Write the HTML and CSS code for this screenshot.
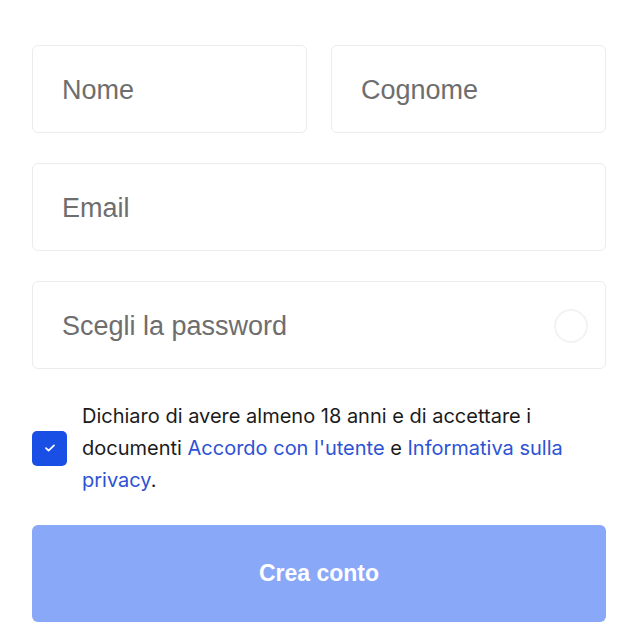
FILE: index.html
```html
<!DOCTYPE html>
<html lang="it">
<head>
<meta charset="utf-8">
<title>Crea conto</title>
<link rel="stylesheet" href="styles.css">
</head>
<body>
<form class="form">
  <div class="row">
    <label class="field"><input class="input" type="text" placeholder="Nome"></label>
    <label class="field"><input class="input" type="text" placeholder="Cognome"></label>
  </div>
  <label class="field"><input class="input" type="email" placeholder="Email"></label>
  <label class="field field-pass">
    <input class="input" type="password" placeholder="Scegli la password">
    <span class="ring"></span>
  </label>
  <div class="consent">
    <span class="check">
      <svg width="12" height="10" viewBox="0 0 12 10"><path d="M2 5.2 L4.6 7.6 L10 2.4" fill="none" stroke="#fff" stroke-width="1.8" stroke-linecap="round" stroke-linejoin="round"/></svg>
    </span>
    <p class="consent-text">Dichiaro di avere almeno 18 anni e di accettare i documenti <a class="link" href="#">Accordo con l'utente</a> e <a class="link" href="#">Informativa sulla privacy</a>.</p>
  </div>
  <button class="submit" type="button">Crea conto</button>
</form>
</body>
</html>
```

FILE: styles.css
```css
html, body {
  margin: 0;
  padding: 0;
  background: #ffffff;
}
.form {
  width: 574px;
  padding: 45px 0 0 32px;
  display: flex;
  flex-direction: column;
  gap: 30px;
}
.row {
  display: flex;
  gap: 24px;
}
.row .field {
  flex: 1;
}
.field {
  position: relative;
  display: block;
  height: 88px;
  box-sizing: border-box;
  border: 1px solid #ececec;
  border-radius: 6px;
}
.input {
  width: 100%;
  height: 100%;
  box-sizing: border-box;
  border: 0;
  outline: none;
  background: transparent;
  padding: 2px 0 0 29px;
  font-family: "Liberation Sans", Arial, sans-serif;
  font-size: 27px;
  color: #333;
}
.input::placeholder {
  color: #6e6e6e;
}
.ring {
  position: absolute;
  right: 17px;
  top: 27px;
  width: 30px;
  height: 30px;
  border: 2px solid #f3f3f3;
  border-radius: 50%;
}
.consent {
  display: flex;
  align-items: center;
  gap: 15px;
  margin-top: 1px;
}
.check {
  flex: none;
  width: 35px;
  height: 35px;
  border-radius: 5px;
  background: #1a4fe6;
  display: flex;
  align-items: center;
  justify-content: center;
}
.consent-text {
  margin: 0;
  font-family: Inter, "Noto Sans", sans-serif;
  font-size: 20px;
  line-height: 32px;
  color: #1b1b1b;
}
.link {
  color: #2e52d4;
  text-decoration: none;
}
.submit {
  height: 97px;
  margin-top: -1px;
  border: 0;
  border-radius: 6px;
  background: #8aa8f8;
  color: #ffffff;
  font-family: "Liberation Sans", Arial, sans-serif;
  font-weight: bold;
  font-size: 23px;
  cursor: pointer;
}
```
